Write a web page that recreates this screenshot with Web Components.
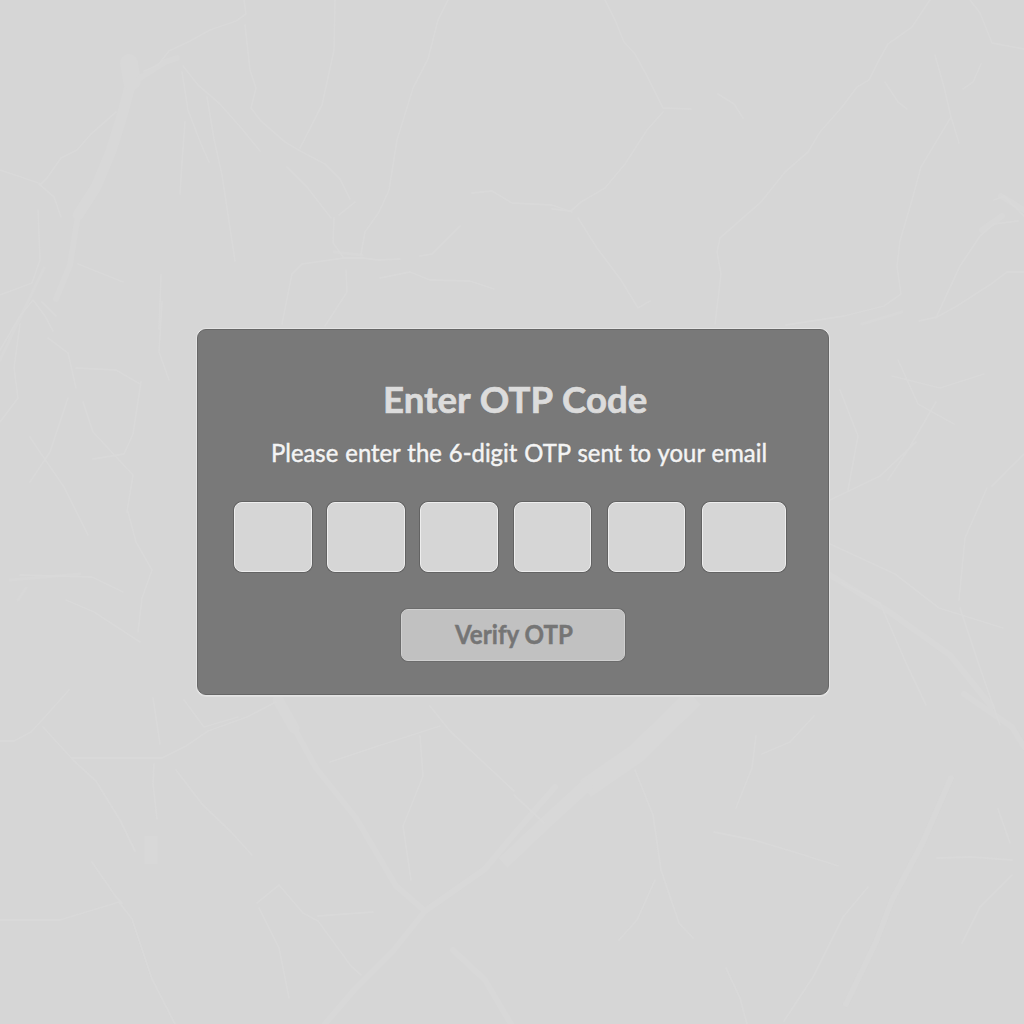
<!DOCTYPE html>
<html lang="en">
<head>
<meta charset="utf-8">
<title>Enter OTP Code</title>
<style>
html,body{margin:0;height:100%;background:#d6d6d6;overflow:hidden}
</style>
</head>
<body>
<otp-page>
  <otp-card>
    <otp-line slot="title" kind="title" width="264">Enter OTP Code</otp-line>
    <otp-line slot="hint" kind="hint" width="496">Please enter the 6-digit OTP sent to your email</otp-line>
    <otp-fields slot="fields"></otp-fields>
    <otp-button slot="action"><otp-line kind="button" width="118">Verify OTP</otp-line></otp-button>
  </otp-card>
</otp-page>
<script>
const define = (name, html, setup) => customElements.define(name, class extends HTMLElement {
  constructor() {
    super();
    this.attachShadow({mode: 'open'}).innerHTML = html;
  }
  connectedCallback() { if (setup) setup(this); }
});

define('marble-veins', `
<style>:host{display:block;position:absolute;inset:0;z-index:-1}svg{display:block;width:1024px;height:1024px}</style>
<svg viewBox="0 0 1024 1024" fill="none" stroke="#dadada" stroke-linecap="round" stroke-linejoin="round" aria-hidden="true">
<g stroke-width="1.8" opacity=".75">
<path d="M244 0l2 14-10 7-26 9-20 11-21 10-11 14-14 6M183 66l15 19 22 19 22 25 18 22M182 72l6 38 13 34 8 18M207 97l7 42 8 36 8 53 5 33M245 25l5 45 6 18-5 20 10 13 24 21 17 10 23 12 15 15 10 20M448 0l-10 20-10 39-15 29-16 52-8 50-10 22-14 20-4 22M287 167l20 20 24 31M334 218l-1 25 11 15h19l15 2 22-1M355 202l-16 13M344 258l-42 6-10 10-10 50M346 270l1 22-22 34"/>
<path d="M335 0l-1 50-12 55-22 43M116 112l-25 22-14 16-16 8-14 20-6 6-17-6-24-8M185 122l-3 40-2 32M39 184l15 13 7 20M38 210l2 50-8 23-32 12M78 264l20 8 25 10M161 275l-2 54M380 278l30-6 20 8 40 1 24 8M420 256l12-2 14-14 14-14M472 193l20-2 20 12 40 2 20 7"/>
<path d="M605 0l10 20 9 22 11 12 12 22 16 32 28 1M663 112l-16 18-22 34-20 24-24 14-10 9-19-2M578 218l19 30 24 32 17 28 12-7M718 94l16 10 9 14M930 0l-18 27-24 17-10 18-9 18-12 7-15 20-22 25-12 20-23 20-24 30-41 36-3 14 4 22-6 50"/>
<path d="M885 82l13 20 9 7M935 55l9 32 7 30-12 20-18 30-9 33-12 41-3 25 4 28-17 12-40 10-58 9M951 117l8 26M970 0l10 13 12 30 32 6M981 64l-8 18-10 7M1024 272h-17l-16 12-34 22-20 11-18 4M1018 221l-24 3-14 12-20 30-14 30-10 22"/>
<path d="M1024 216l-20-20-10 4M0 350l20-34 13-16 12 16 8 15M42 302l14 14M20 324l-6 44 4 30-18 24M48 338l20 15 8 35M76 368l40 2 24 14M68 398l-18 54-20 30M141 382l-8 52-9 20-31 5M83 402l10 30 40 43-6 37M162 302l-3 50 10 28M88 535l-24-48-22-32-12-18M128 512l8 30 16 28-10 28-4 34"/>
<path d="M20 575l72 2 31 15M66 600l28 12 46 30M0 741h14l17-9 12-13 26-29M43 727l31 34 22 20 24 39 15 31M72 758h90l24-12 22-15 39-14 29-15M153 698l7 46M184 700l20 27 34-10M154 764l-1 20 4 35M176 770l26 34 30 29 20 22M0 920h60l59-18 13 17 20 60 23 45M92 862l24 35 6 6M257 903l22-18 24 28 15 8 33 45M259 908l20 40 10 50M318 916l55-4M351 966l10 9"/>
<path d="M420 736l3 40-20 50 8 54M330 762l48-16 62-20M430 706l20 25 64 60M514 795l30 28M635 770l18 45 8 55 18 53 14 15M655 880l-18 40-18 20M714 832l40 8 50 15 34 11M756 736l-4 32-16 40M762 754l28-12 24-26M726 968l14 30 7 26M937 858l35-1 40 3M998 809l12 34M1012 875l-32 32-18 36M868 887l-25 30-30 60-29 44"/>
<path d="M830 500l50-24 36-34M830 544l65 30 44 34 64 20M842 583l38 20 26 60 20 42M892 376l48 12 44-14M898 360l20 44 36 20M936 402l-28 48-20 30M960 608l20 60 20 57M840 390l18 46-10 54M987 488l-22 50-6 62M1024 454l-32 32"/>
</g>
<g opacity=".5">
<path stroke-width="11" d="M129 61l1 25-8 30-11 35-15 36-18 28M278 700l16 28"/>
<path stroke-width="18" d="M129 63l3 18"/>
<path stroke-width="6" d="M140 78l25-16 12-4M78 215l-8 50-14 34M294 728l22 40 40 50 40 68 29 25 60-42 30-36 40-46M425 911l-32 40-38 38-30 35"/>
<path stroke-width="20" stroke-linecap="butt" d="M694 697l-57 56-52 36"/>
<path stroke-width="13" stroke-linecap="butt" d="M590 782l-47 43-40 38M151 836v28"/>
<path stroke-width="6" d="M951 778l-28 64-31 58-16 42-30 62M453 950l32 30 26 44M964 694l48 33 12 20M1001 196l23 14M982 230l20-14M830 575l58 36 62 44 42 52"/>
<path stroke-width="3" d="M0 360l20-42 24-50M10 580l70-6M862 324l40-12M334 252l28 3M18 600l8-12"/>
</g>
</svg>`);

define('otp-page', `
<style>
:host{display:block;position:relative;z-index:0;box-sizing:border-box;width:1024px;height:1024px;padding:329px 195px 0 197px;background:#d6d6d6;overflow:hidden}
</style><marble-veins></marble-veins><slot></slot>`);

define('otp-card', `
<style>
:host{display:flex;flex-direction:column;align-items:center;box-sizing:border-box;width:632px;height:366px;padding-top:48px;border-radius:9px;background:#797979;border:1px solid #676767;box-shadow:0 0 0 1px #e4e4e4,0 1px 0 1px #e0e0e0}
.title{height:44px;display:flex;align-items:center;margin-left:4px}
.hint{height:34px;display:flex;align-items:center;margin-top:13px;margin-left:11px}
.fields{margin-top:32.5px;align-self:stretch;padding-left:36px}
.action{margin-top:37px}
</style>
<div class="title"><slot name="title"></slot></div>
<div class="hint"><slot name="hint"></slot></div>
<div class="fields"><slot name="fields"></slot></div>
<div class="action"><slot name="action"></slot></div>`);

/* A single line of text, condensed or widened to the width it is given. */
define('otp-line', `
<style>
:host{display:block;white-space:nowrap}
span{display:inline-block;transform-origin:0 50%}
:host([kind=title]){font:700 35.5px/44px Lato,sans-serif;word-spacing:1px;color:#dcdcdc;-webkit-text-stroke:.7px #dcdcdc;text-shadow:0 0 1px #5f5f5f}
:host([kind=hint]){font:400 25px/34px Lato,sans-serif;word-spacing:1px;color:#f4f4f4;-webkit-text-stroke:.5px #f4f4f4;text-shadow:0 0 1px #5f5f5f}
:host([kind=button]){font:700 26px/34px Lato,"Open Sans",sans-serif;color:#757575;-webkit-text-stroke:.5px #757575;text-shadow:0 0 1px #d0d0d0}
</style><span><slot></slot></span>`, el => {
  const span = el.shadowRoot.querySelector('span');
  const width = +el.getAttribute('width');
  const natural = span.offsetWidth;
  el.style.width = width + 'px';
  span.style.transform = `scaleX(${width / natural})`;
});

define('otp-box', `
<style>
:host{display:block;box-sizing:border-box;height:70.5px;border-radius:8px;background:#d6d6d6;border:1px solid #eee;box-shadow:0 0 0 1px #636363}
</style>`);

define('otp-fields', `
<style>
:host{display:flex;gap:15px}
otp-box{flex:0 0 78px}
otp-box:nth-of-type(4){flex-basis:77px;margin-left:1px}
otp-box:nth-of-type(5){flex-basis:77px;margin-left:2px}
otp-box:nth-of-type(6){flex-basis:84.5px;margin-left:1.5px}
</style>
${'<otp-box></otp-box>'.repeat(6)}`);

define('otp-button', `
<style>
:host{display:flex;align-items:center;justify-content:center;box-sizing:border-box;width:224px;height:52px;border-radius:7px;background:#c1c1c1;border:1px solid #d0d0d0;box-shadow:0 0 0 1px #6c6c6c;padding:0 0 3px 2px}
</style><slot></slot>`);
</script>
</body>
</html>
